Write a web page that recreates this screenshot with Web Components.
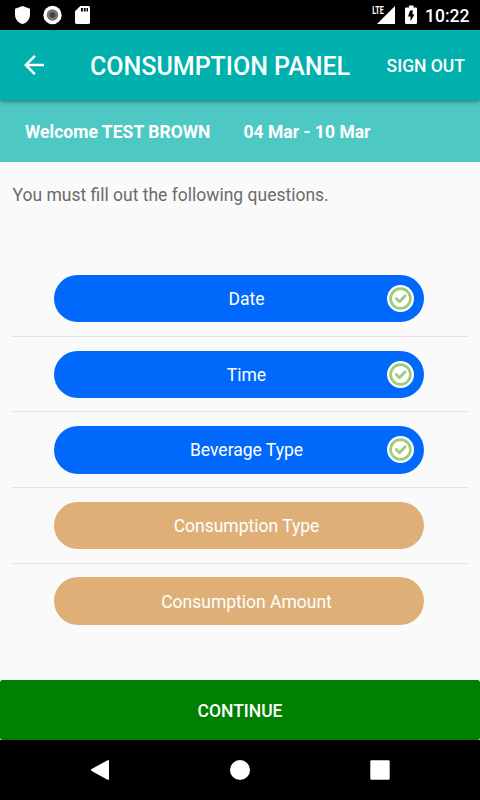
<!DOCTYPE html>
<html lang="en">
<head>
<meta charset="utf-8">
<meta name="viewport" content="width=device-width, initial-scale=1">
<title>Consumption Panel</title>
<style>
  html, body {
    margin: 0;
    height: 100%;
  }

  body {
    font-family: Roboto, "Liberation Sans", sans-serif;
    background: #fafafa;
    overflow: hidden;
  }
</style>
</head>
<body>
<consumption-app></consumption-app>

<script>
class StatusBar extends HTMLElement {
  constructor() {
    super();
    this.attachShadow({ mode: 'open' });
  }

  connectedCallback() {
    this.shadowRoot.innerHTML = `
      <style>
        :host {
          display: flex;
          justify-content: space-between;
          height: 30px;
          flex: none;
          background: #000;
          color: #fff;
        }

        svg {
          display: block;
          flex: none;
        }

        .time {
          width: 45px;
          margin-right: 10px;
          font-size: 17.5px;
          font-weight: 500;
          line-height: 32px;
          white-space: nowrap;
        }

        .right {
          display: flex;
        }
      </style>
      <svg width="100" height="30" viewBox="0 0 100 30">
        <path fill="#fff" d="M22.5 6 L30 8.8 V14.5 C30 19 27 22.8 22.5 24 C18 22.8 15 19 15 14.5 V8.8 Z"/>
        <circle cx="52.5" cy="15" r="9.2" fill="#fff"/>
        <circle cx="52.5" cy="15" r="5.8" fill="#757575"/>
        <circle cx="52.5" cy="15" r="2.8" fill="#424242"/>
        <path fill="#fff" d="M80.3 6 H88.6 Q90 6 90 7.4 V22.6 Q90 24 88.6 24 H76.4 Q75 24 75 22.6 V11.3 Z"/>
        <path fill="#000" d="M81 8h1.8v3.4H81zM83.8 8h1.8v3.4h-1.8zM86.5 8h1.5v3.4h-1.5z"/>
      </svg>
      <div class="right">
        <svg width="56" height="30" viewBox="369 0 56 30">
          <path fill="#fff" d="M395 6 V24 H377 Z"/>
          <path fill="#000" d="M371 4h13.8v11H371z"/>
          <text x="372.3" y="14" font-size="10.8" font-weight="700" textLength="11.5" lengthAdjust="spacingAndGlyphs" fill="#fff">LTE</text>
          <path fill="#fff" d="M409 5.5h4.5v2h2.2q1.3 0 1.3 1.3v13.9q0 1.3-1.3 1.3h-9.4q-1.3 0-1.3-1.3V8.8q0-1.3 1.3-1.3H409z"/>
          <path fill="#000" d="M412.6 10 V14.5 H414.5 L410.5 21.3 V16.6 H408 L410 10.8 Z"/>
        </svg>
        <span class="time">10:22</span>
      </div>
    `;
  }
}

class AppToolbar extends HTMLElement {
  constructor() {
    super();
    this.attachShadow({ mode: 'open' });
  }

  connectedCallback() {
    this.shadowRoot.innerHTML = `
      <style>
        :host {
          display: flex;
          align-items: center;
          height: 70px;
          flex: none;
          box-sizing: border-box;
          padding: 0 15px 0 19px;
          background: #00b0ac;
          color: #fff;
          box-shadow: 0 1px 5px rgba(0, 0, 0, 0.5);
          position: relative;
          z-index: 1;
        }

        svg {
          display: block;
        }

        h1 {
          flex: 1;
          margin: 3px 0 0 41px;
          font-size: 25px;
          font-weight: 500;
          line-height: 30px;
          white-space: nowrap;
        }

        button {
          margin: 2px 0 0;
          padding: 0;
          border: 0;
          background: none;
          color: inherit;
          font: 500 17.5px/24px Roboto, sans-serif;
          white-space: nowrap;
        }
      </style>
      <svg width="30" height="30" viewBox="0 0 24 24">
        <path fill="#fff" d="M20 11H7.83l5.59-5.59L12 4l-8 8 8 8 1.41-1.41L7.83 13H20v-2z"/>
      </svg>
      <h1><slot></slot></h1>
      <button><slot name="action"></slot></button>
    `;
  }
}

class WelcomeBanner extends HTMLElement {
  constructor() {
    super();
    this.attachShadow({ mode: 'open' });
  }

  connectedCallback() {
    this.shadowRoot.innerHTML = `
      <style>
        :host {
          display: flex;
          align-items: center;
          gap: 33px;
          height: 62px;
          flex: none;
          box-sizing: border-box;
          padding: 2px 25px 0;
          background: #4dc8c3;
          color: #fff;
          font-size: 17.5px;
          font-weight: 700;
          letter-spacing: 0.03px;
          white-space: nowrap;
        }
      </style>
      <slot name="user"></slot>
      <slot name="period"></slot>
    `;
  }
}

class QuestionItem extends HTMLElement {
  constructor() {
    super();
    this.attachShadow({ mode: 'open' });
  }

  connectedCallback() {
    const done = this.hasAttribute('done');
    const check = `
      <svg width="27" height="27" viewBox="0 0 27 27">
        <circle cx="13.5" cy="13.5" r="13.5" fill="#fff"/>
        <circle cx="13.5" cy="13.5" r="9.9" fill="none" stroke="#9ccc7c" stroke-width="2.7"/>
        <path d="M9.3 13.6l3.2 3.2 5.7-6" fill="none" stroke="#9ccc7c" stroke-width="2.8" stroke-linecap="round" stroke-linejoin="round"/>
      </svg>
    `;
    this.shadowRoot.innerHTML = `
      <style>
        :host {
          display: block;
          padding: 13.8px 44px 13.4px 42px;
          border-bottom: 1px solid #e3e3e3;
        }

        :host(:last-child) {
          border-bottom: 0;
        }

        .pill {
          display: grid;
          grid-template-columns: 37px 1fr 37px;
          align-items: center;
          height: 47.4px;
          box-sizing: border-box;
          padding-left: 14px;
          border-radius: 24px;
          background: #deb078;
          color: #fff;
          font-size: 17.5px;
        }

        .pill.done {
          background: #0069fc;
        }

        .label {
          grid-column: 2;
          text-align: center;
          white-space: nowrap;
          padding: 1px 0 0 1px;
        }

        svg {
          display: block;
        }
      </style>
      <div class="pill ${done ? 'done' : ''}">
        <span class="label"><slot></slot></span>
        ${done ? check : ''}
      </div>
    `;
  }
}

class ContinueButton extends HTMLElement {
  constructor() {
    super();
    this.attachShadow({ mode: 'open' });
  }

  connectedCallback() {
    this.shadowRoot.innerHTML = `
      <style>
        :host {
          display: block;
          height: 60px;
          flex: none;
        }

        button {
          display: block;
          width: 100%;
          height: 60px;
          border: 0;
          border-radius: 2.5px;
          padding: 2px 0 0;
          background: #008000;
          color: #fff;
          font: 500 17.5px Roboto, sans-serif;
        }
      </style>
      <button><slot></slot></button>
    `;
  }
}

class NavBar extends HTMLElement {
  constructor() {
    super();
    this.attachShadow({ mode: 'open' });
  }

  connectedCallback() {
    this.shadowRoot.innerHTML = `
      <style>
        :host {
          display: flex;
          align-items: center;
          justify-content: center;
          gap: 120px;
          height: 60px;
          flex: none;
          background: #000;
        }

        svg {
          display: block;
        }
      </style>
      <svg width="20" height="20" viewBox="0 0 20 20">
        <path fill="#fff" d="M17.6.2Q19-.3 19 1.2V18.8Q19 20.3 17.6 19.8L1.6 10.9Q.4 10 1.6 9.1Z"/>
      </svg>
      <svg width="20" height="20" viewBox="0 0 20 20"><circle cx="10" cy="10" r="10" fill="#fff"/></svg>
      <svg width="20" height="20" viewBox="0 0 20 20"><rect x=".3" y=".3" width="19.4" height="19.4" rx="1.3" fill="#fff"/></svg>
    `;
  }
}

class ConsumptionApp extends HTMLElement {
  constructor() {
    super();
    this.attachShadow({ mode: 'open' });
  }

  connectedCallback() {
    this.shadowRoot.innerHTML = `
      <style>
        :host {
          display: flex;
          flex-direction: column;
          width: 480px;
          height: 800px;
          background: #fafafa;
        }

        main {
          flex: 1;
          min-height: 0;
          padding: 0 12px;
        }

        p {
          margin: 22px 0 55.3px 0.5px;
          color: #6b6b6b;
          font-size: 17.5px;
          line-height: 22px;
        }
      </style>
      <status-bar></status-bar>
      <app-toolbar>
        CONSUMPTION PANEL
        <span slot="action">SIGN OUT</span>
      </app-toolbar>
      <welcome-banner>
        <span slot="user">Welcome TEST BROWN</span>
        <span slot="period">04 Mar - 10 Mar</span>
      </welcome-banner>
      <main>
        <p>You must fill out the following questions.</p>
        <section>
          <question-item done>Date</question-item>
          <question-item done>Time</question-item>
          <question-item done>Beverage Type</question-item>
          <question-item>Consumption Type</question-item>
          <question-item>Consumption Amount</question-item>
        </section>
      </main>
      <continue-button>CONTINUE</continue-button>
      <nav-bar></nav-bar>
    `;
  }
}

customElements.define('status-bar', StatusBar);
customElements.define('app-toolbar', AppToolbar);
customElements.define('welcome-banner', WelcomeBanner);
customElements.define('question-item', QuestionItem);
customElements.define('continue-button', ContinueButton);
customElements.define('nav-bar', NavBar);
customElements.define('consumption-app', ConsumptionApp);
</script>
</body>
</html>
